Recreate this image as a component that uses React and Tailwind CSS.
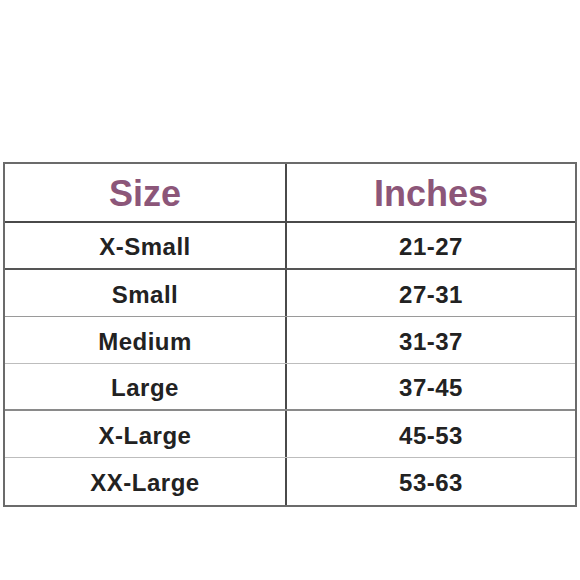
export default function App() {
  const rows = [
    ["X-Small", "21-27", "border-b-2 border-[#555555]"],
    ["Small", "27-31", "border-b border-[#9a9a9a]"],
    ["Medium", "31-37", "border-b border-[#bdbdbd]"],
    ["Large", "37-45", "border-b-2 border-[#8a8a8a]"],
    ["X-Large", "45-53", "border-b border-[#bdbdbd]"],
    ["XX-Large", "53-63", ""],
  ];
  return (
    <div className="w-[580px] h-[580px] bg-white overflow-hidden" style={{ fontFamily: '"Liberation Sans", Arial, sans-serif' }}>
      <div className="mt-[162px] ml-[3px] w-[574px] border-2 border-[#6b6b6b]">
        <div className="flex h-[59px] border-b-2 border-[#4a4a4a]">
          <div className="w-[282px] border-r-2 border-[#4a4a4a] flex items-center justify-center pt-[2px] text-[36px] font-bold text-[#8c5679]">Size</div>
          <div className="flex-1 flex items-center justify-center pt-[2px] text-[36px] font-bold text-[#8c5679]">Inches</div>
        </div>
        {rows.map(([s, i, b]) => (
          <div key={s} className={`flex h-[47px] ${b}`}>
            <div className="w-[282px] border-r-2 border-[#4a4a4a] flex items-center justify-center pt-[3px] text-[24px] font-bold tracking-[0.5px] text-[#222222]">{s}</div>
            <div className="flex-1 flex items-center justify-center pt-[3px] text-[24px] font-bold tracking-[0.5px] text-[#222222]">{i}</div>
          </div>
        ))}
      </div>
    </div>
  );
}
